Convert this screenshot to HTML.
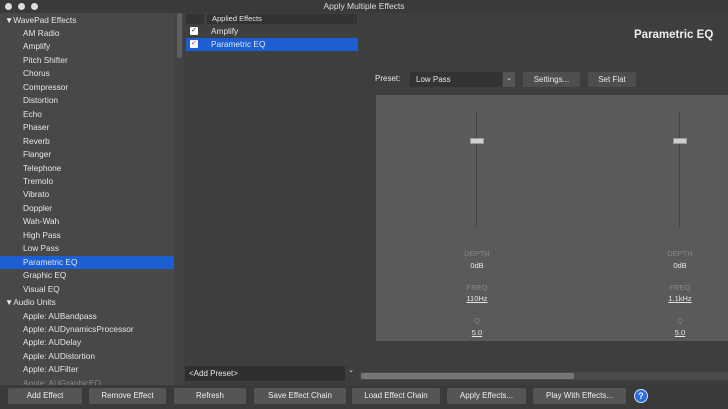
<!DOCTYPE html>
<html><head><style>
*{margin:0;padding:0;box-sizing:border-box}
body{width:728px;height:409px;overflow:hidden;background:#3e3e3e;font-family:"Liberation Sans",sans-serif;font-size:8px;color:#e6e6e6;position:relative}
.a{position:absolute}
.row{position:absolute;left:0;width:173px;height:13px;line-height:13px;padding-left:23px;white-space:nowrap;font-size:8.3px}
.hd{padding-left:5px}
.btn{position:absolute;top:388px;height:16px;line-height:16px;background:#555;border-radius:2px;text-align:center;color:#eee;font-size:8px}
.lbl{position:absolute;width:60px;text-align:center;font-size:7.5px}
</style></head><body>
<div class="a" style="left:0;top:0;width:728px;height:13px;background:#3a3a3a"></div>
<div class="a" style="left:5px;top:3px;width:7px;height:7px;border-radius:50%;background:#ddd"></div>
<div class="a" style="left:18px;top:3px;width:7px;height:7px;border-radius:50%;background:#ddd"></div>
<div class="a" style="left:31px;top:3px;width:7px;height:7px;border-radius:50%;background:#ddd"></div>
<div class="a" style="left:0;top:1px;width:728px;text-align:center;font-size:8.5px;color:#ddd">Apply Multiple Effects</div>
<div class="a" style="left:0;top:13px;width:174px;height:372px;background:#484848"></div>
<div class="a" style="left:174px;top:13px;width:10px;height:372px;background:#434343"></div>
<div class="a" style="left:177px;top:13px;width:5px;height:45px;background:#5e5e5e;border-radius:2px"></div>
<div class="a" style="left:0;top:256px;width:174px;height:13px;background:#1b5fd3"></div>
<div class="row hd" style="top:14px">▼WavePad Effects</div>
<div class="row" style="top:27px">AM Radio</div>
<div class="row" style="top:40px">Amplify</div>
<div class="row" style="top:54px">Pitch Shifter</div>
<div class="row" style="top:67px">Chorus</div>
<div class="row" style="top:81px">Compressor</div>
<div class="row" style="top:94px">Distortion</div>
<div class="row" style="top:108px">Echo</div>
<div class="row" style="top:121px">Phaser</div>
<div class="row" style="top:135px">Reverb</div>
<div class="row" style="top:148px">Flanger</div>
<div class="row" style="top:162px">Telephone</div>
<div class="row" style="top:175px">Tremolo</div>
<div class="row" style="top:188px">Vibrato</div>
<div class="row" style="top:202px">Doppler</div>
<div class="row" style="top:215px">Wah-Wah</div>
<div class="row" style="top:229px">High Pass</div>
<div class="row" style="top:242px">Low Pass</div>
<div class="row" style="top:256px">Parametric EQ</div>
<div class="row" style="top:269px">Graphic EQ</div>
<div class="row" style="top:283px">Visual EQ</div>
<div class="row hd" style="top:296px">▼Audio Units</div>
<div class="row" style="top:310px">Apple: AUBandpass</div>
<div class="row" style="top:323px">Apple: AUDynamicsProcessor</div>
<div class="row" style="top:336px">Apple: AUDelay</div>
<div class="row" style="top:350px">Apple: AUDistortion</div>
<div class="row" style="top:363px">Apple: AUFilter</div>
<div class="row" style="top:377px;color:#888">Apple: AUGraphicEQ</div>
<div class="a" style="left:185px;top:13px;width:173px;height:352px;background:#3f3f3f"></div>
<div class="a" style="left:186px;top:14px;width:18px;height:10px;background:#333"></div>
<div class="a" style="left:207px;top:14px;width:150px;height:10px;background:#333;padding-left:5px;line-height:10px;font-size:7.5px">Applied Effects</div>
<div class="a" style="left:186px;top:38px;width:172px;height:13px;background:#1b5fd3"></div>
<div class="a" style="left:190px;top:27px;width:8px;height:8px;background:#fff;border-radius:1px;color:#222;font-size:7px;line-height:8px;text-align:center">✓</div>
<div class="a" style="left:190px;top:40px;width:8px;height:8px;background:#fff;border-radius:1px;color:#c22;font-size:7px;line-height:8px;text-align:center">✓</div>
<div class="a" style="left:211px;top:26px;font-size:8.3px">Amplify</div>
<div class="a" style="left:211px;top:39px;font-size:8.3px">Parametric EQ</div>
<div class="a" style="left:634px;top:29px;font-size:11.5px;font-weight:bold;color:#eee">Parametric EQ</div>
<div class="a" style="left:375px;top:74px">Preset:</div>
<div class="a" style="left:410px;top:72px;width:92px;height:15px;background:#333;line-height:15px;padding-left:6px">Low Pass</div>
<div class="a" style="left:503px;top:72px;width:12px;height:15px;background:#555;line-height:14px;text-align:center;font-size:7px">⌄</div>
<div class="a" style="left:523px;top:72px;width:57px;height:15px;background:#4e4e4e;line-height:15px;text-align:center">Settings...</div>
<div class="a" style="left:588px;top:72px;width:48px;height:15px;background:#4e4e4e;line-height:15px;text-align:center">Set Flat</div>
<div class="a" style="left:376px;top:95px;width:352px;height:246px;background:#5a5a5a"></div>
<div class="a" style="left:476px;top:112px;width:1px;height:115px;background:#444"></div>
<div class="a" style="left:470px;top:138px;width:14px;height:6px;background:#cfcfcf;border:1px solid #999"></div>
<div class="a" style="left:679px;top:112px;width:1px;height:115px;background:#444"></div>
<div class="a" style="left:673px;top:138px;width:14px;height:6px;background:#cfcfcf;border:1px solid #999"></div>
<div class="lbl" style="left:447px;top:249px;color:#888">DEPTH</div>
<div class="lbl" style="left:447px;top:261px">0dB</div>
<div class="lbl" style="left:447px;top:283px;color:#888">FREQ</div>
<div class="lbl" style="left:447px;top:294px;text-decoration:underline">110Hz</div>
<div class="lbl" style="left:447px;top:316px;color:#888">Q</div>
<div class="lbl" style="left:447px;top:328px;text-decoration:underline">5.0</div>
<div class="lbl" style="left:650px;top:249px;color:#888">DEPTH</div>
<div class="lbl" style="left:650px;top:261px">0dB</div>
<div class="lbl" style="left:650px;top:283px;color:#888">FREQ</div>
<div class="lbl" style="left:650px;top:294px;text-decoration:underline">1.1kHz</div>
<div class="lbl" style="left:650px;top:316px;color:#888">Q</div>
<div class="lbl" style="left:650px;top:328px;text-decoration:underline">5.0</div>
<div class="a" style="left:185px;top:366px;width:160px;height:15px;background:#2f2f2f;line-height:15px;padding-left:4px">&lt;Add Preset&gt;</div>
<div class="a" style="left:346px;top:366px;width:10px;height:12px;font-size:7px;text-align:center">⌄</div>
<div class="a" style="left:360px;top:372px;width:368px;height:8px;background:#4a4a4a"></div>
<div class="a" style="left:361px;top:373px;width:213px;height:6px;background:#777;border-radius:2px"></div>
<div class="a" style="left:0;top:385px;width:728px;height:24px;background:#3a3a3a"></div>
<div class="btn" style="left:8px;width:74px">Add Effect</div>
<div class="btn" style="left:89px;width:77px">Remove Effect</div>
<div class="btn" style="left:174px;width:72px">Refresh</div>
<div class="btn" style="left:254px;width:92px">Save Effect Chain</div>
<div class="btn" style="left:352px;width:88px">Load Effect Chain</div>
<div class="btn" style="left:447px;width:79px">Apply Effects...</div>
<div class="btn" style="left:533px;width:93px">Play With Effects...</div>
<div class="a" style="left:634px;top:389px;width:14px;height:14px;border-radius:50%;background:#2a6ee0;border:1px solid #cde;color:#fff;font-weight:bold;font-size:9px;line-height:12px;text-align:center">?</div>
</body></html>
